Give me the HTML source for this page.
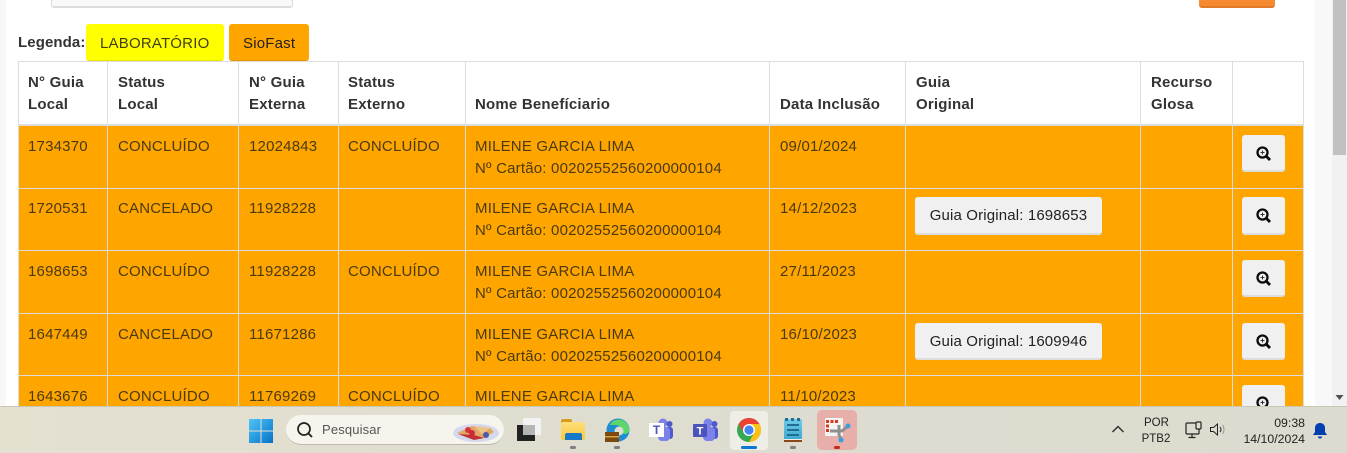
<!DOCTYPE html>
<html lang="pt"><head><meta charset="utf-8"><title>Guias</title>
<style>
*{box-sizing:border-box}
html,body{margin:0;padding:0;width:1347px;height:453px;overflow:hidden;background:#fff;font-family:"Liberation Sans",Arial,sans-serif;font-size:15px;color:#333}
.a{position:absolute}
.t{position:absolute;white-space:nowrap;line-height:22px;letter-spacing:.2px}
.h{font-weight:bold;color:#333}
.d{color:#4a3a10}
.btn{position:absolute;background:#f0f0f0;border-radius:3px;border-bottom:2px solid #ddd}
.vl{position:absolute;width:1px;background:#ddd;top:61px;height:345px}
.hl{position:absolute;left:18px;width:1286px;height:1px;background:#ddd}
.gb{color:#222;text-align:center;line-height:38px;letter-spacing:.15px}
.tb{font-size:12.3px;color:#222;white-space:nowrap;position:absolute;line-height:16px}
.m{position:absolute;left:14px}
</style></head><body>
<div class="a" style="left:0;top:0;width:6px;height:406px;background:#f8f8f8"></div>
<div class="a" style="left:1315px;top:0;width:17px;height:406px;background:#f8f8f8"></div>
<div class="a" style="left:1332px;top:0;width:15px;height:406px;background:#f1f1f1"></div>
<div class="a" style="left:1333px;top:0;width:13px;height:155px;background:#c1c1c1"></div>
<svg class="a" style="left:1334px;top:393px" width="11" height="9"><path d="M1.500 2 L5.500 7 L9.500 2Z" fill="#505050"/></svg>

<div class="a" style="left:51px;top:-3px;width:242px;height:11px;background:#f8f8f8;border:1px solid #ddd;border-bottom-width:2px;border-radius:3px"></div>
<div class="a" style="left:1199px;top:-3px;width:76px;height:11px;background:#f68a30;border-bottom:2px solid #e07a28;border-radius:3px"></div>

<div class="t h" style="left:18px;top:32px;letter-spacing:.1px">Legenda:</div>
<div class="a" style="left:86px;top:24px;width:138px;height:37px;background:#ff0;border-bottom:1px solid #e6e600;border-radius:3px"></div>
<div class="t" style="left:100px;top:33px;color:#3f3f10">LABORATÓRIO</div>
<div class="a" style="left:229px;top:24px;width:80px;height:37px;background:#ffa500;border-bottom:1px solid #e59500;border-radius:3px"></div>
<div class="t" style="left:243px;top:33px;color:#222">SioFast</div>

<!-- table -->
<div class="a" style="left:18px;top:125px;width:1286px;height:281px;background:#ffa500"></div>
<div class="hl" style="top:61px"></div>
<div class="a" style="left:18px;top:124px;width:1286px;height:2px;background:#ddd"></div>
<div class="hl" style="top:188px"></div>
<div class="hl" style="top:250px"></div>
<div class="hl" style="top:313px"></div>
<div class="hl" style="top:375px"></div>
<div class="vl" style="left:18px"></div><div class="vl" style="left:107px"></div><div class="vl" style="left:238px"></div><div class="vl" style="left:338px"></div><div class="vl" style="left:465px"></div><div class="vl" style="left:769px"></div><div class="vl" style="left:905px"></div><div class="vl" style="left:1140px"></div><div class="vl" style="left:1232px"></div><div class="vl" style="left:1303px"></div>

<!-- header -->
<div class="t h" style="left:28px;top:72px">N° Guia<br>Local</div>
<div class="t h" style="left:118px;top:72px">Status<br>Local</div>
<div class="t h" style="left:249px;top:72px">N° Guia<br>Externa</div>
<div class="t h" style="left:348px;top:72px">Status<br>Externo</div>
<div class="t h" style="left:475px;top:94px">Nome Benefíciario</div>
<div class="t h" style="left:780px;top:94px">Data Inclusão</div>
<div class="t h" style="left:916px;top:72px">Guia<br>Original</div>
<div class="t h" style="left:1151px;top:72px">Recurso<br>Glosa</div>

<!-- rows -->
<div class="t d" style="left:28px;top:136px">1734370</div><div class="t d" style="left:118px;top:136px">CONCLUÍDO</div><div class="t d" style="left:249px;top:136px">12024843</div><div class="t d" style="left:348px;top:136px">CONCLUÍDO</div><div class="t d" style="left:475px;top:136px">MILENE GARCIA LIMA<br>Nº Cartão: 00202552560200000104</div><div class="t d" style="left:780px;top:136px">09/01/2024</div>
<div class="t d" style="left:28px;top:198px">1720531</div><div class="t d" style="left:118px;top:198px">CANCELADO</div><div class="t d" style="left:249px;top:198px">11928228</div><div class="t d" style="left:475px;top:198px">MILENE GARCIA LIMA<br>Nº Cartão: 00202552560200000104</div><div class="t d" style="left:780px;top:198px">14/12/2023</div>
<div class="t d" style="left:28px;top:261px">1698653</div><div class="t d" style="left:118px;top:261px">CONCLUÍDO</div><div class="t d" style="left:249px;top:261px">11928228</div><div class="t d" style="left:348px;top:261px">CONCLUÍDO</div><div class="t d" style="left:475px;top:261px">MILENE GARCIA LIMA<br>Nº Cartão: 00202552560200000104</div><div class="t d" style="left:780px;top:261px">27/11/2023</div>
<div class="t d" style="left:28px;top:324px">1647449</div><div class="t d" style="left:118px;top:324px">CANCELADO</div><div class="t d" style="left:249px;top:324px">11671286</div><div class="t d" style="left:475px;top:324px">MILENE GARCIA LIMA<br>Nº Cartão: 00202552560200000104</div><div class="t d" style="left:780px;top:324px">16/10/2023</div>
<div class="t d" style="left:28px;top:386px">1643676</div><div class="t d" style="left:118px;top:386px">CONCLUÍDO</div><div class="t d" style="left:249px;top:386px">11769269</div><div class="t d" style="left:348px;top:386px">CONCLUÍDO</div><div class="t d" style="left:475px;top:386px">MILENE GARCIA LIMA</div><div class="t d" style="left:780px;top:386px">11/10/2023</div>

<!-- buttons -->
<div class="btn gb" style="left:915px;top:197px;width:187px;height:38px">Guia Original: 1698653</div>
<div class="btn gb" style="left:915px;top:323px;width:187px;height:37px">Guia Original: 1609946</div>

<div class="btn" style="left:1242px;top:135px;width:43px;height:37px"><svg class="m" style="top:11px" width="16" height="16" viewBox="0 0 16 16"><circle cx="6.500" cy="6.500" r="5" fill="none" stroke="#0a0a0a" stroke-width="2.300"/><path d="M10.300 10.300 14 14" stroke="#0a0a0a" stroke-width="2.800"/><path d="M6.500 4.500v4M4.500 6.500h4" stroke="#333" stroke-width="1"/></svg></div>
<div class="btn" style="left:1242px;top:197px;width:43px;height:38px"><svg class="m" style="top:11px" width="16" height="16" viewBox="0 0 16 16"><circle cx="6.500" cy="6.500" r="5" fill="none" stroke="#0a0a0a" stroke-width="2.300"/><path d="M10.300 10.300 14 14" stroke="#0a0a0a" stroke-width="2.800"/><path d="M6.500 4.500v4M4.500 6.500h4" stroke="#333" stroke-width="1"/></svg></div>
<div class="btn" style="left:1242px;top:260px;width:43px;height:37px"><svg class="m" style="top:11px" width="16" height="16" viewBox="0 0 16 16"><circle cx="6.500" cy="6.500" r="5" fill="none" stroke="#0a0a0a" stroke-width="2.300"/><path d="M10.300 10.300 14 14" stroke="#0a0a0a" stroke-width="2.800"/><path d="M6.500 4.500v4M4.500 6.500h4" stroke="#333" stroke-width="1"/></svg></div>
<div class="btn" style="left:1242px;top:323px;width:43px;height:37px"><svg class="m" style="top:11px" width="16" height="16" viewBox="0 0 16 16"><circle cx="6.500" cy="6.500" r="5" fill="none" stroke="#0a0a0a" stroke-width="2.300"/><path d="M10.300 10.300 14 14" stroke="#0a0a0a" stroke-width="2.800"/><path d="M6.500 4.500v4M4.500 6.500h4" stroke="#333" stroke-width="1"/></svg></div>
<div class="btn" style="left:1242px;top:385px;width:43px;height:37px"><svg class="m" style="top:11px" width="16" height="16" viewBox="0 0 16 16"><circle cx="6.500" cy="6.500" r="5" fill="none" stroke="#0a0a0a" stroke-width="2.300"/><path d="M10.300 10.300 14 14" stroke="#0a0a0a" stroke-width="2.800"/><path d="M6.500 4.500v4M4.500 6.500h4" stroke="#333" stroke-width="1"/></svg></div>

<!-- taskbar -->
<div class="a" style="left:0;top:406px;width:1347px;height:47px;background:linear-gradient(90deg,#e5e1d1 0,#dfddd0 45%,#dcdbcf 100%);border-top:1px solid #c9c6b8"></div>
<svg class="a" style="left:249px;top:419px" width="24" height="24"><defs><linearGradient id="w" x1="0" y1="0" x2="1" y2="1"><stop offset="0" stop-color="#4cc4f8"/><stop offset="1" stop-color="#0672c8"/></linearGradient></defs><path d="M0 0h11.500v11.500H0zM12.500 0H24v11.500H12.500zM0 12.500h11.500V24H0zM12.500 12.500H24V24H12.500z" fill="url(#w)"/></svg>
<div class="a" style="left:286px;top:415px;width:218px;height:30px;border-radius:15px;background:#f6f4ec;border-bottom:1px solid #bdbaa9"></div>
<svg class="a" style="left:296px;top:421px" width="18" height="18"><circle cx="8" cy="8" r="6" fill="none" stroke="#222" stroke-width="1.700"/><path d="M12.200 12.200 16 16" stroke="#222" stroke-width="1.900"/></svg>
<div class="tb" style="left:322px;top:422px;font-size:13px;color:#555;letter-spacing:.15px">Pesquisar</div>
<svg class="a" style="left:452px;top:420px" width="48" height="24"><ellipse cx="24" cy="13" rx="23" ry="9" fill="#d5d9ee"/><path d="M5 13 20 6 38 8 42 12 30 19 18 18z" fill="#e3a866"/><path d="M6 14 22 15 32 18 22 20z" fill="#c43030"/><path d="M22 6 38 8 30 14z" fill="#eec38a"/><circle cx="16" cy="10" r="3" fill="#d8343c"/><circle cx="20" cy="13" r="3" fill="#c92c38"/><circle cx="34" cy="15" r="3" fill="#5058a8"/></svg>
<div class="a" style="left:517px;top:425px;width:18px;height:16px;background:#222"></div>
<div class="a" style="left:523px;top:418px;width:18px;height:17px;background:#f2f2f2"></div>
<div class="a" style="left:523px;top:425px;width:12px;height:10px;background:#b5b5b5"></div>

<!-- folder -->
<div class="a" style="left:561px;top:419px;width:11px;height:6px;background:#d99b1c;border-radius:2px 2px 0 0"></div>
<div class="a" style="left:561px;top:422px;width:24px;height:18px;background:linear-gradient(#fddf7a,#f8c93a);border-radius:2px"></div>
<div class="a" style="left:565px;top:433px;width:17px;height:7px;background:#1a78c8;border-radius:2px 2px 0 0"></div>
<div class="a" style="left:570px;top:446px;width:6px;height:3px;background:#808080;border-radius:2px"></div>
<!-- edge -->
<svg class="a" style="left:604px;top:417px" width="26" height="26"><circle cx="14" cy="13" r="11.500" fill="#1f8ed0"/><path d="M6 8C9 0 24 0 25.500 13 25 17 20 18 17 16 20 11 15 8 11 8 9 8 7 8 6 8Z" fill="#5cd66c"/><circle cx="15" cy="14" r="4.500" fill="#dfddd0"/><rect x="1" y="15" width="14" height="10" fill="#7a4a10"/><rect x="1" y="19" width="14" height="1.500" fill="#e0a040"/></svg>
<div class="a" style="left:614px;top:446px;width:6px;height:3px;background:#808080;border-radius:2px"></div>
<!-- teams 1 -->
<svg class="a" style="left:648px;top:418px" width="26" height="24"><circle cx="15" cy="5" r="4.500" fill="#7b83eb"/><circle cx="21.500" cy="6" r="3" fill="#5059c9"/><rect x="17" y="9" width="8" height="12" rx="3" fill="#5059c9"/><rect x="10" y="9" width="12" height="14" rx="4" fill="#7b83eb"/><rect x="1" y="5" width="15" height="14" fill="#fff"/><text x="8.500" y="16" font-family="Liberation Sans" font-size="12" font-weight="bold" fill="#4b53bc" text-anchor="middle">T</text></svg>
<!-- teams 2 -->
<svg class="a" style="left:693px;top:418px" width="26" height="24"><circle cx="15" cy="5" r="4.500" fill="#7b83eb"/><circle cx="21.500" cy="6" r="3" fill="#5059c9"/><rect x="17" y="9" width="8" height="12" rx="3" fill="#5059c9"/><rect x="10" y="9" width="12" height="14" rx="4" fill="#7b83eb"/><rect x="0" y="6" width="14" height="13" rx="1" fill="#4b53bc"/><text x="7" y="16.500" font-family="Liberation Sans" font-size="11" font-weight="bold" fill="#fff" text-anchor="middle">T</text></svg>
<!-- chrome -->
<div class="a" style="left:730px;top:411px;width:38px;height:39px;background:#efeee6;border-radius:4px"></div>
<svg class="a" style="left:737px;top:418px" width="24" height="24" viewBox="0 0 24 24"><circle cx="12" cy="12" r="12" fill="#34a853"/><path d="M12 0A12 12 0 0 1 22.400 6H12L6.800 15 1.600 6A12 12 0 0 1 12 0Z" fill="#ea4335"/><path d="M22.400 6A12 12 0 0 1 12 24L17.200 15 12 6Z" fill="#fbc116"/><circle cx="12" cy="12" r="6" fill="#fff"/><circle cx="12" cy="12" r="4.600" fill="#4285f4"/></svg>
<div class="a" style="left:741px;top:446px;width:16px;height:3px;background:#0a78d4;border-radius:2px"></div>
<!-- notepad -->
<div class="a" style="left:784px;top:419px;width:18px;height:21px;background:linear-gradient(#6fcbe6,#3fa8cf);border-radius:2px 2px 0 0"></div>
<div class="a" style="left:785px;top:418px;width:16px;height:3px;background:repeating-linear-gradient(90deg,#1f6f94 0 3px,transparent 3px 6px)"></div>
<div class="a" style="left:787px;top:424px;width:12px;height:2px;background:#1f6f94"></div>
<div class="a" style="left:787px;top:429px;width:12px;height:2px;background:#1f6f94"></div>
<div class="a" style="left:787px;top:434px;width:12px;height:2px;background:#1f6f94"></div>
<div class="a" style="left:784px;top:439px;width:18px;height:1px;background:#eee"></div>
<div class="a" style="left:784px;top:440px;width:18px;height:2px;background:#8a4a18"></div>
<div class="a" style="left:790px;top:446px;width:6px;height:3px;background:#808080;border-radius:2px"></div>
<!-- snip -->
<div class="a" style="left:817px;top:410px;width:40px;height:40px;background:#e8aeaa;border-radius:5px"></div>
<svg class="a" style="left:824px;top:417px" width="28" height="28"><rect x="1" y="1" width="18" height="18" rx="1" fill="#f3f3f3"/><path d="M2 3h3v3H2zM6.500 3h3v3h-3zM11 3h3v3h-3zM2 7.500h3v3H2zM2 12h3v3H2z" fill="#d83a20"/><path d="M6 14h12l6-5M15 8v10l2 4" fill="none" stroke="#8f8f8f" stroke-width="3"/><circle cx="24" cy="9" r="2.500" fill="#3a9fe0"/><circle cx="17" cy="23" r="2.500" fill="#3a9fe0"/></svg>
<div class="a" style="left:834px;top:446px;width:6px;height:3px;background:#c42b1c;border-radius:2px"></div>

<!-- tray -->
<svg class="a" style="left:1111px;top:424px" width="14" height="10"><path d="M1.500 8 7 2.500 12.500 8" fill="none" stroke="#333" stroke-width="1.500"/></svg>
<div class="tb" style="left:1144px;top:415px;width:24px;text-align:center;font-size:11.500px">POR</div>
<div class="tb" style="left:1141px;top:431px;width:30px;text-align:center;font-size:11.500px">PTB2</div>
<svg class="a" style="left:1185px;top:421px" width="18" height="18" fill="none" stroke="#222" stroke-width="1.200"><rect x="1" y="2" width="13" height="11" rx="1"/><rect x="11" y="1" width="5" height="7" rx="1" fill="#dfddd0"/><path d="M7 13v3M3.500 16.500h7"/></svg>
<svg class="a" style="left:1209px;top:422px" width="17" height="16" fill="none" stroke="#222" stroke-width="1"><path d="M1.500 5.500h3L8.500 2v11L4.500 9.500h-3z"/><path d="M11 5c1.200 1.500 1.200 3.500 0 5"/><path d="M13.500 3c2 2.500 2 6.500 0 9" stroke="#999"/></svg>
<div class="tb" style="left:1244px;top:415px;width:61px;text-align:right">09:38</div>
<div class="tb" style="left:1235px;top:431px;width:70px;text-align:right">14/10/2024</div>
<svg class="a" style="left:1312px;top:422px" width="16" height="17"><path d="M8 1c-3 0-5 2-5 5v4L1 13h14l-2-3V6c0-3-2-5-5-5z" fill="#003fb0"/><path d="M6 14.500h4a2 2 0 0 1-4 0z" fill="#003fb0"/></svg>
</body></html>
